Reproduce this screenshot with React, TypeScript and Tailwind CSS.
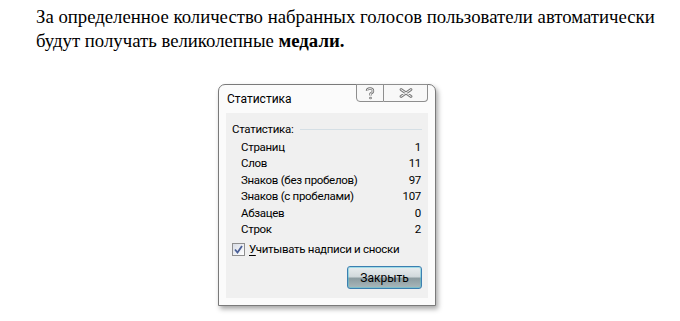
import React from "react";

const rows: [string, string][] = [
  ["Страниц", "1"],
  ["Слов", "11"],
  ["Знаков (без пробелов)", "97"],
  ["Знаков (с пробелами)", "107"],
  ["Абзацев", "0"],
  ["Строк", "2"],
];

export default function App() {
  return (
    <div className="w-[680px] h-[321px] bg-white overflow-hidden">
      <div
        className="pl-[36px] pt-[5px] text-[18.75px] leading-[24px] text-black"
        style={{ fontFamily: '"Liberation Serif", serif' }}
      >
        <div>За определенное количество набранных голосов пользователи автоматически</div>
        <div>
          будут получать великолепные <b>медали.</b>
        </div>
      </div>

      <div className="ml-[218px] mt-[31px] w-[218px] h-[222px] relative">
        <div
          className="w-full h-full rounded-t-[7px] border border-[#7a7a7a] bg-[#fbfbfb] shadow-[2px_3px_5px_rgba(0,0,0,0.35)] flex flex-col px-[7px] pb-[7px]"
          style={{ fontFamily: 'Roboto, sans-serif' }}
        >
          <div className="h-[28px] flex items-start justify-between">
            <div className="text-[12px] text-black pl-[1px] pt-[5px] leading-[18px]">Статистика</div>
            <div className="flex -mt-[1px]">
              <div className="w-[28px] h-[18px] border border-[#8e8e8e] rounded-bl-[4px] bg-[#f8f8f8] flex items-center justify-center">
                <svg width="10" height="13" viewBox="0 0 10 13">
                  <path d="M2 4 Q2 1.5 5 1.5 Q8 1.5 8 4 Q8 5.6 5.5 6.6 L5.5 8.5" fill="none" stroke="#707070" strokeWidth="2.4" strokeLinejoin="round" />
                  <path d="M2 4 Q2 1.5 5 1.5 Q8 1.5 8 4 Q8 5.6 5.5 6.6 L5.5 8.5" fill="none" stroke="#f8f8f8" strokeWidth="0.9" />
                  <circle cx="5.5" cy="11" r="1.3" fill="#707070" />
                  <circle cx="5.5" cy="11" r="0.5" fill="#f8f8f8" />
                </svg>
              </div>
              <div className="w-[44px] h-[18px] border border-l-0 border-[#8e8e8e] rounded-br-[4px] bg-[#f8f8f8] flex items-center justify-center">
                <svg width="14" height="10" viewBox="0 0 14 10">
                  <path d="M2 1.5 L12 8.5 M12 1.5 L2 8.5" stroke="#7e7e7e" strokeWidth="2.8" strokeLinecap="round" />
                  <path d="M2 1.5 L12 8.5 M12 1.5 L2 8.5" stroke="#f4f4f4" strokeWidth="1" strokeLinecap="round" />
                </svg>
              </div>
            </div>
          </div>

          <div className="flex-1 bg-[#f0f0f0] flex flex-col px-[6px] text-[11.5px] tracking-[-0.3px] leading-[16px] text-black">
            <div className="flex items-center mt-[8px] h-[16px]">
              <span>Статистика:</span>
              <div className="flex-1 ml-[7px] h-px bg-[#d5dfe5]" />
            </div>
            <div className="flex flex-col mt-[2px] pl-[9px] pr-[1px]">
              {rows.map(([k, v]) => (
                <div key={k} className="flex justify-between h-[16.4px]">
                  <span>{k}</span>
                  <span>{v}</span>
                </div>
              ))}
            </div>
            <div className="flex items-center mt-[4px] h-[16px]">
              <div className="w-[13px] h-[13px] border border-[#8f8f8f] bg-gradient-to-br from-[#d9dde6] to-[#ffffff] flex items-center justify-center">
                <svg width="9" height="9" viewBox="0 0 9 9">
                  <path d="M1 4.5 L3.5 7.5 L8 1" fill="none" stroke="#4a5f97" strokeWidth="1.8" />
                </svg>
              </div>
              <span className="ml-[4px]">
                <span className="underline underline-offset-2">У</span>читывать надписи и сноски
              </span>
            </div>
            <div className="flex justify-end mt-[9px] pr-[0px]">
              <div className="w-[75px] h-[23px] rounded-[3px] border border-[#3c7fb1] shadow-[0_0_0_1px_rgba(73,200,220,0.45)_inset] flex items-center justify-center bg-[linear-gradient(to_bottom,#e8edef_0%,#d2dadd_45%,#8c9ca1_55%,#aab8bb_100%)]">
                <span className="text-[12px] leading-[14px] tracking-normal">Закрыть</span>
              </div>
            </div>
          </div>
        </div>
      </div>
    </div>
  );
}
